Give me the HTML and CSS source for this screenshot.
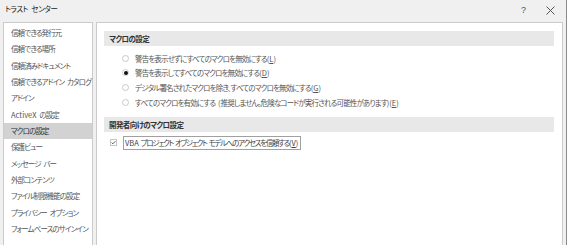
FILE: index.html
```html
<!DOCTYPE html>
<html lang="ja">
<head>
    <meta charset="UTF-8">
    <title>トラスト センター</title>
    <link rel="stylesheet" href="styles.css">
</head>
<body>
    <div class="dialog">
        <div class="titlebar">
            <span class="title">トラスト センター</span>
            <div class="title-buttons">
                <span class="help">?</span>
                <svg class="close" width="9" height="9" viewBox="0 0 9 9"><path d="M0.5 0.5 L8.5 8.5 M8.5 0.5 L0.5 8.5" stroke="#555" stroke-width="1" fill="none"/></svg>
            </div>
        </div>
        <div class="content">
            <ul class="nav">
                <li>信頼できる発行元</li>
                <li>信頼できる場所</li>
                <li>信頼済みドキュメント</li>
                <li>信頼できるアドイン カタログ</li>
                <li>アドイン</li>
                <li><span class="latin">ActiveX</span> の設定</li>
                <li class="selected">マクロの設定</li>
                <li>保護ビュー</li>
                <li>メッセージ バー</li>
                <li>外部コンテンツ</li>
                <li>ファイル制限機能の設定</li>
                <li>プライバシー オプション</li>
                <li>フォームベースのサインイン</li>
            </ul>
            <div class="panel">
                <div class="section-header">マクロの設定</div>
                <div class="radio-list">
                    <div class="radio-row"><span class="radio"></span><span>警告を表示せずにすべてのマクロを無効にする<span class="latin">(<u>L</u>)</span></span></div>
                    <div class="radio-row"><span class="radio checked"></span><span>警告を表示してすべてのマクロを無効にする<span class="latin">(<u>D</u>)</span></span></div>
                    <div class="radio-row"><span class="radio"></span><span>デジタル署名されたマクロを除き、すべてのマクロを無効にする<span class="latin">(<u>G</u>)</span></span></div>
                    <div class="radio-row"><span class="radio"></span><span>すべてのマクロを有効にする <span class="latin">(</span>推奨しません。危険なコードが実行される可能性があります<span class="latin">)(<u>E</u>)</span></span></div>
                </div>
                <div class="section-header second">開発者向けのマクロ設定</div>
                <div class="check-row">
                    <svg class="checkbox" width="7" height="7" viewBox="0 0 7 7"><rect x="0.5" y="0.5" width="6" height="6" fill="#fff" stroke="#c4c4c4"/><path d="M1.6 3.6 L2.9 4.8 L5.4 2.2" stroke="#444" stroke-width="0.9" fill="none"/></svg>
                    <span class="focus-label"><span class="latin">VBA</span> プロジェクト オブジェクト モデルへのアクセスを信頼する<span class="latin">(<u>V</u>)</span></span>
                </div>
            </div>
        </div>
    </div>
</body>
</html>
```

FILE: styles.css
```css
body {
    margin: 0;
    font-family: "Noto Sans CJK JP", "Noto Sans", sans-serif;
    background: #f0f0f0;
}
.dialog {
    width: 566px;
    height: 245px;
    border-right: 1px solid #8c8c8c;
    display: flex;
    flex-direction: column;
    overflow: hidden;
}
.dialog * {
    font-feature-settings: "palt";
    word-spacing: 2px;
}
.latin {
    letter-spacing: 0;
}
.titlebar {
    height: 22px;
    display: flex;
    justify-content: space-between;
    align-items: flex-start;
    padding: 3px 0 0 5px;
    box-sizing: border-box;
}
.title {
    font-size: 7.5px;
    letter-spacing: -0.4px;
    color: #222;
    line-height: 12px;
}
.title-buttons {
    display: flex;
    align-items: center;
    gap: 20px;
    margin-right: 11px;
    height: 14px;
}
.help {
    font-size: 9px;
    color: #555;
    font-family: "Liberation Sans", sans-serif;
}
.content {
    flex: 1;
    display: flex;
    gap: 3px;
    padding-left: 3px;
}
.nav {
    list-style: none;
    margin: 0;
    padding: 2px 0 0;
    width: 90px;
    box-sizing: border-box;
    background: #fff;
    border: 1px solid #cbcbcb;
    border-bottom: none;
}
.nav li {
    height: 16.33px;
    line-height: 16.33px;
    padding-left: 7px;
    font-size: 7.5px;
    letter-spacing: -0.9px;
    color: #555;
    white-space: nowrap;
}
.nav li.selected {
    background: #d2d2d2;
    color: #333;
}
.panel {
    width: 467px;
    box-sizing: border-box;
    background: #fff;
    border: 1px solid #cbcbcb;
    border-bottom: none;
    padding: 8px 8px 0 7px;
}
.section-header {
    height: 15px;
    line-height: 15px;
    background: #e8e8e8;
    padding-left: 5px;
    font-size: 7.5px;
    letter-spacing: -0.6px;
    color: #333;
    font-weight: 600;
}
.section-header.second {
    margin-top: 7px;
}
.radio-list {
    padding: 5px 0 0 18px;
}
.radio-row {
    height: 14.67px;
    display: flex;
    align-items: center;
    gap: 6px;
    font-size: 7.5px;
    letter-spacing: -0.85px;
    color: #555;
    white-space: nowrap;
}
.radio {
    width: 7px;
    height: 7px;
    box-sizing: border-box;
    border: 1px solid #c8c8c8;
    border-radius: 50%;
    position: relative;
    flex-shrink: 0;
}
.radio.checked {
    border-color: #d0d0d0;
}
.radio.checked::after {
    content: "";
    position: absolute;
    left: 0.5px;
    top: 0.5px;
    width: 4px;
    height: 4px;
    border-radius: 50%;
    background: #111;
}
.check-row {
    margin-top: 4px;
    height: 14px;
    display: flex;
    align-items: center;
    gap: 6px;
    padding-left: 6px;
}
.focus-label {
    border: 1px solid #a0a0a0;
    padding: 0 2px 0 1px;
    line-height: 12px;
    font-size: 7.5px;
    letter-spacing: -1.3px;
    word-spacing: 1.5px;
    color: #444;
    white-space: nowrap;
}
.focus-label span {
    word-spacing: 1.5px;
}
u {
    text-decoration: underline;
}
```
